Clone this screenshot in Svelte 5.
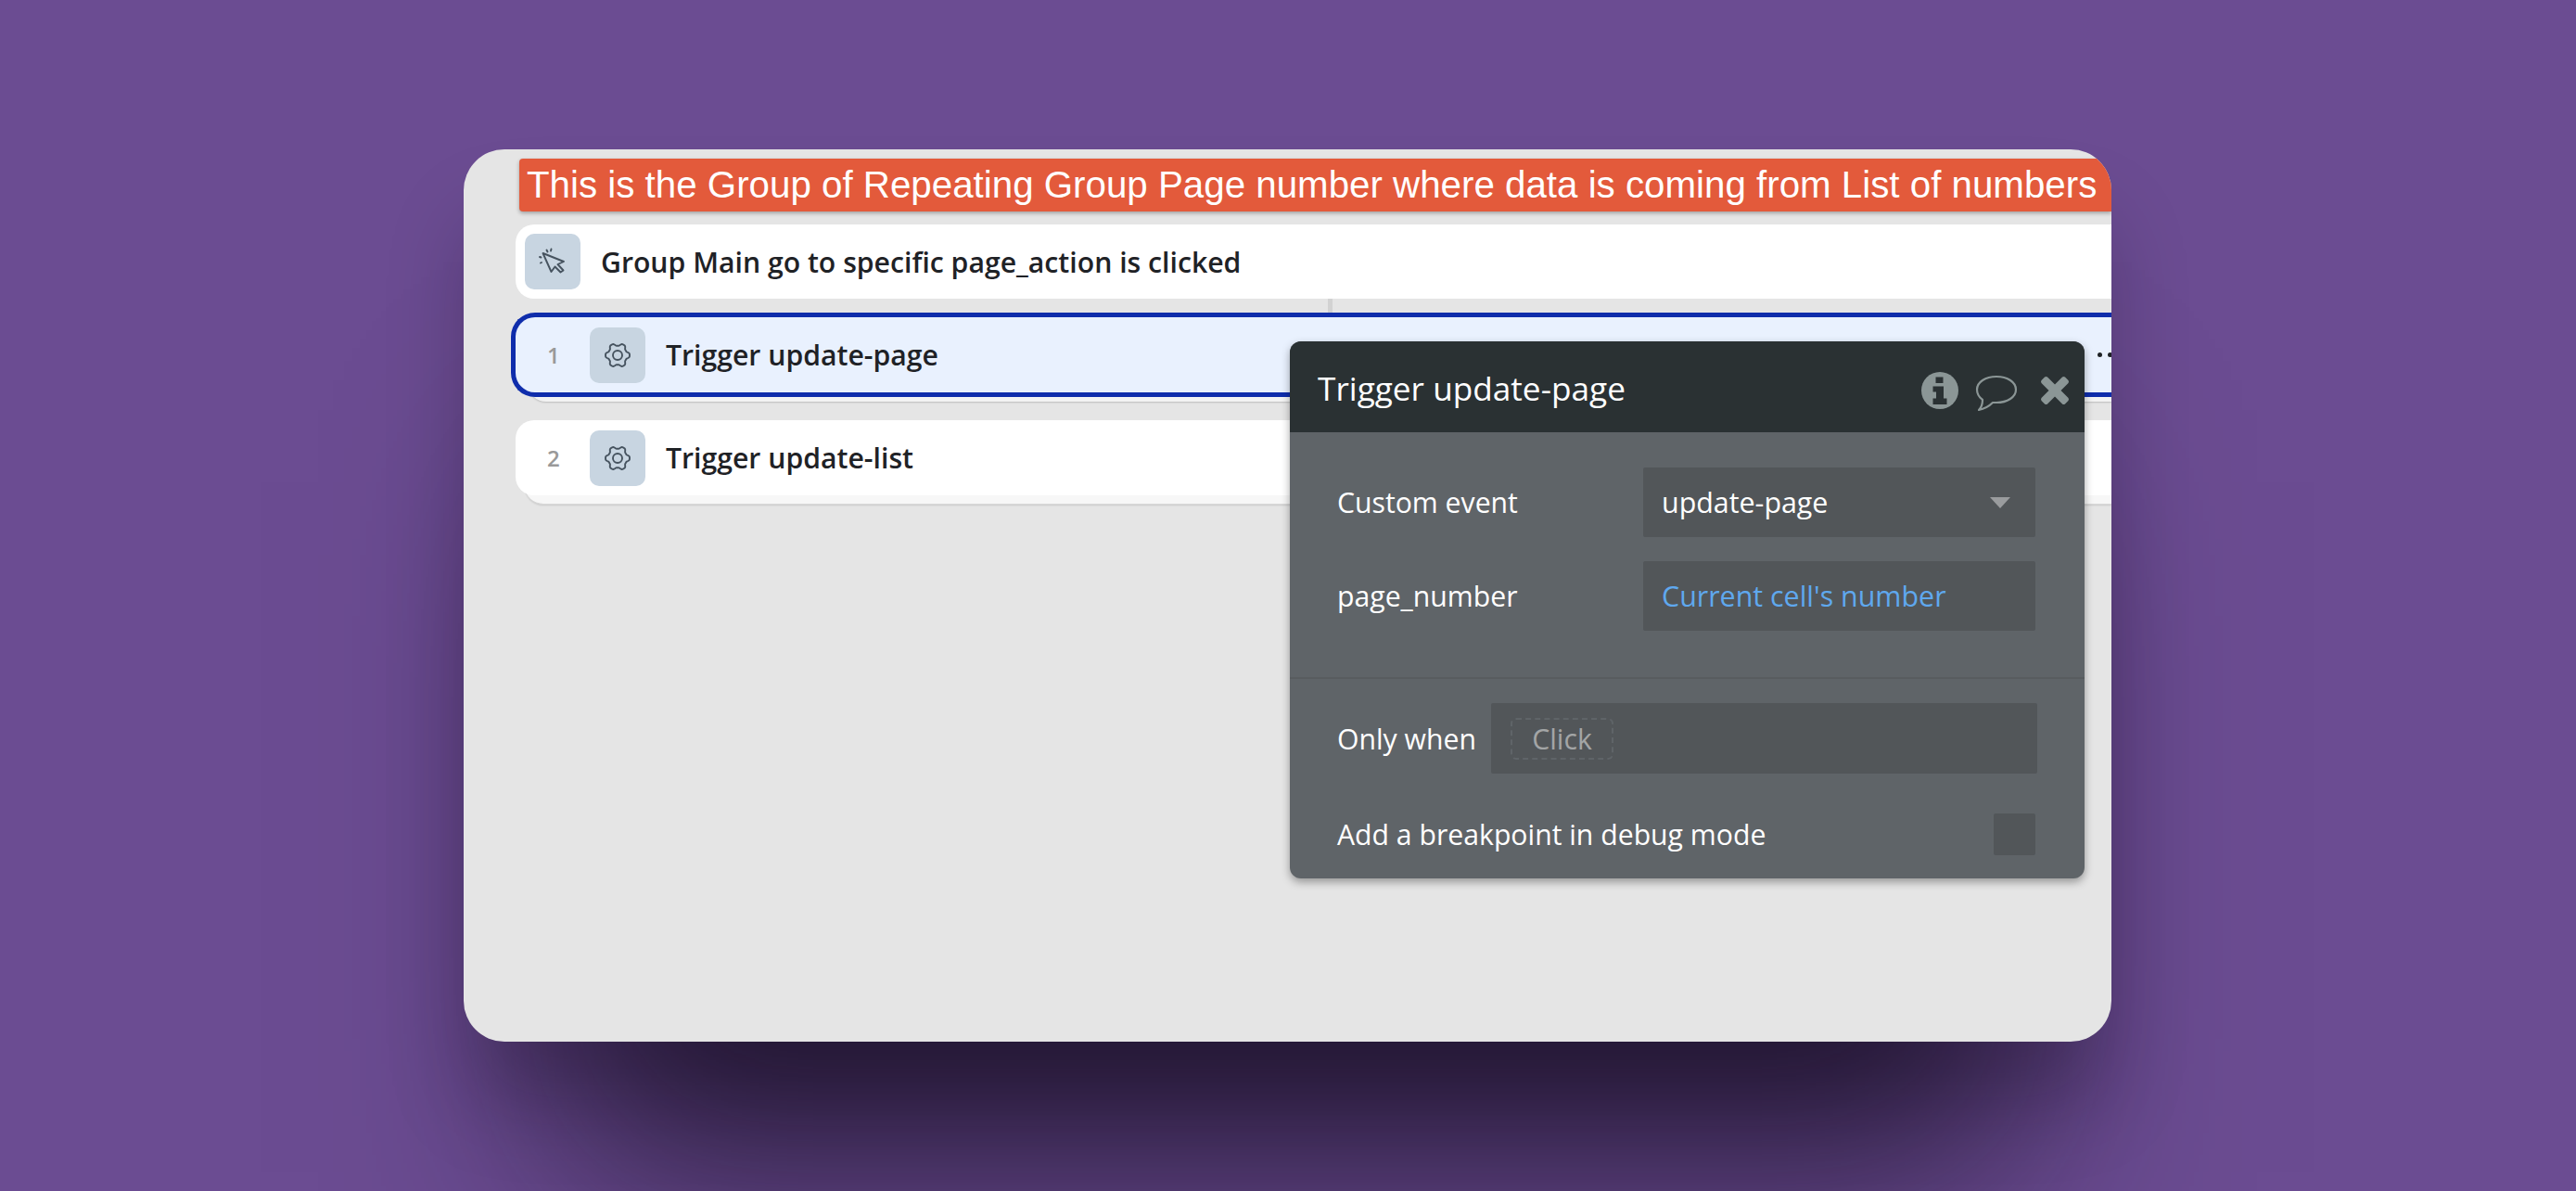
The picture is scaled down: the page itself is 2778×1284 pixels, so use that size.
<script>
  const rows = [
    { num: '1', label: 'Trigger update-page', selected: true },
    { num: '2', label: 'Trigger update-list', selected: false }
  ];

  // six lobed gear outline, same shape for every action row
  function gearPath() {
    let d = '';
    for (let i = 0; i < 120; i++) {
      const a = (i / 120) * Math.PI * 2;
      const r = 11.6 + 1.6 * Math.cos(6 * a) - 0.25 * Math.cos(18 * a);
      const x = 15 + r * Math.cos(a);
      const y = 15 + r * Math.sin(a);
      d += (i === 0 ? 'M' : 'L') + x.toFixed(2) + ' ' + y.toFixed(2) + ' ';
    }
    return d + 'Z';
  }
  const gear = gearPath();
</script>

<div class="page">
  <div class="window">
    <div class="banner">This is the Group of Repeating Group Page number where data is coming from List of numbers</div>

    <div class="event-row">
      <div class="icon-box">
        <svg width="32" height="32" viewBox="0 0 32 32" fill="none" stroke="#46535f" stroke-width="1.9" stroke-linejoin="round" stroke-linecap="round">
          <path d="M5.5 7 L28 16 L21.5 19 L27.5 25.5 L24.5 27.5 L18.5 21.5 L14.5 27 Z" />
          <path d="M14.5 2.5 L14 4.5 M9.5 3.5 L10.5 5.5 M2 11 L3.5 11.5 M3 17.5 L4 17" />
        </svg>
      </div>
      <span class="row-label">Group Main go to specific page_action is clicked</span>
    </div>

    <div class="connector"></div>

    {#each rows as row}
      <div class="action-wrap" class:last={!row.selected}>
        <div class="action-row" class:selected={row.selected}>
          <span class="num">{row.num}</span>
          <div class="icon-box">
            <svg width="30" height="30" viewBox="0 0 30 30" fill="none" stroke="#46535f" stroke-width="1.9">
              <path d={gear} />
              <circle cx="15" cy="15" r="5" />
            </svg>
          </div>
          <span class="row-label">{row.label}</span>
          {#if row.selected}
            <span class="dots"><i></i><i></i></span>
          {/if}
        </div>
      </div>
    {/each}

    <div class="panel">
      <div class="panel-head">
        <span class="panel-title">Trigger update-page</span>
        <div class="panel-icons">
          <svg width="40" height="40" viewBox="0 0 40 40">
            <circle cx="20" cy="20" r="20" fill="#8b9696" />
            <path d="M15.5 5.5h8v6.5h-8z M12.5 15.5h11.5v13h3.5v6.5H12.5v-6.5h3.5v-7h-3.5z" fill="#2a3133" />
          </svg>
          <svg class="bubble" width="46" height="40" viewBox="0 0 46 40" fill="none" stroke="#8b9696" stroke-width="2.2" stroke-linejoin="round">
            <path d="M23 2 C35 2 44 8 44 16 C44 24 35 30 23 30 C21 30 20 30 19 30 C15 34 9 37 4 38 C7 35 8 31 8 27 C4 24 2 20 2 16 C2 8 11 2 23 2 Z" />
          </svg>
          <svg class="close" width="32" height="32" viewBox="0 0 32 32" fill="#8b9696">
            <path d="M8 1.5 L16 9.5 L24 1.5 Q25.5 0.5 27 1.5 L30.5 5 Q31.5 6.5 30.5 8 L22.5 16 L30.5 24 Q31.5 25.5 30.5 27 L27 30.5 Q25.5 31.5 24 30.5 L16 22.5 L8 30.5 Q6.5 31.5 5 30.5 L1.5 27 Q0.5 25.5 1.5 24 L9.5 16 L1.5 8 Q0.5 6.5 1.5 5 L5 1.5 Q6.5 0.5 8 1.5 Z" />
          </svg>
        </div>
      </div>

      <div class="panel-section">
        <div class="field">
          <span class="field-label">Custom event</span>
          <div class="input select">
            <span>update-page</span>
            <span class="caret"></span>
          </div>
        </div>
        <div class="field">
          <span class="field-label">page_number</span>
          <div class="input dynamic">Current cell's number</div>
        </div>
      </div>

      <div class="panel-section lower">
        <div class="when">
          <span class="field-label">Only when</span>
          <div class="when-input">
            <span class="click-chip">Click</span>
          </div>
        </div>
        <div class="breakpoint">
          <span class="field-label">Add a breakpoint in debug mode</span>
          <div class="checkbox"></div>
        </div>
      </div>
    </div>
  </div>
</div>

<style>
  :global(body) {
    margin: 0;
    background: #6b4c92;
  }

  .page {
    width: 2778px;
    height: 1284px;
    display: flex;
    align-items: center;
    justify-content: center;
    overflow: hidden;
    background: #6b4c92;
  }

  .window {
    position: relative;
    width: 1777px;
    height: 962px;
    margin-right: 1px;
    background: #e5e5e5;
    border-radius: 44px;
    box-shadow:
      0 250px 220px -110px rgba(15, 8, 25, 0.72),
      0 70px 90px -10px rgba(15, 8, 25, 0.28);
    font-family: "Open Sans", sans-serif;
    display: flex;
    flex-direction: column;
    align-items: flex-start;
    overflow: hidden;
  }

  .banner {
    margin: 10px 0 0 60px;
    width: 1717px;
    height: 57px;
    flex: none;
    box-sizing: border-box;
    padding-left: 8px;
    background: #e35a3b;
    border-radius: 4px 0 0 4px;
    box-shadow: 0 2px 4px rgba(0, 0, 0, 0.3);
    color: #fff;
    font-family: "Liberation Sans", Arial, sans-serif;
    font-size: 40.3px;
    line-height: 57px;
    white-space: nowrap;
  }

  .event-row {
    margin: 14px 0 0 56px;
    width: 1721px;
    height: 80px;
    flex: none;
    box-sizing: border-box;
    padding-left: 10px;
    display: flex;
    align-items: center;
    background: #fff;
    border-radius: 20px 0 0 20px;
  }

  .event-row .row-label {
    margin-left: 22px;
  }

  .connector {
    margin-left: 932px;
    width: 5px;
    height: 15px;
    flex: none;
    background: #d2d2d2;
  }

  .icon-box {
    width: 60px;
    height: 60px;
    flex: none;
    display: flex;
    align-items: center;
    justify-content: center;
    background: #c8d5e1;
    border-radius: 10px;
  }

  .row-label {
    color: #1f2226;
    font-size: 30.2px;
    font-weight: 600;
    white-space: nowrap;
  }

  .action-wrap {
    margin-left: 51px;
    width: 1726px;
    flex: none;
    position: relative;
    margin-bottom: 25px;
  }

  .action-wrap.last {
    margin-left: 56px;
    width: 1721px;
  }

  .action-wrap::after {
    content: "";
    position: absolute;
    left: 18px;
    right: 0;
    bottom: -5px;
    height: 40px;
    background: #f3f3f3;
    border-radius: 0 0 0 20px;
    box-shadow: 0 1px 2px rgba(0, 0, 0, 0.18);
  }

  .action-wrap.last::after {
    left: 10px;
    bottom: -10px;
    border-bottom: 1px solid #d8d8d8;
    box-shadow: 0 1px 2px rgba(0, 0, 0, 0.12), inset 0 -9px 0 #f7f7f7;
  }

  .action-row {
    position: relative;
    z-index: 1;
    height: 81px;
    box-sizing: border-box;
    padding-left: 34px;
    display: flex;
    align-items: center;
    background: #fff;
    border-radius: 20px 0 0 20px;
  }

  .action-row.selected {
    height: 91px;
    background: #e9f1fe;
    border: solid #0f2dab;
    border-width: 5px 0 5px 5px;
    border-radius: 26px 0 0 26px;
  }

  .num {
    width: 46px;
    flex: none;
    color: #999;
    font-size: 24px;
    font-weight: 600;
  }

  .action-row .row-label {
    margin-left: 22px;
  }

  .dots {
    position: absolute;
    right: -1px;
    display: flex;
    gap: 6px;
  }

  .dots i {
    display: block;
    width: 5px;
    height: 5px;
    border-radius: 50%;
    background: #1f2226;
  }

  .panel {
    position: absolute;
    left: 891px;
    top: 207px;
    width: 857px;
    height: 579px;
    z-index: 2;
    display: flex;
    flex-direction: column;
    background: #5f6468;
    border-radius: 12px;
    box-shadow: 0 4px 10px rgba(0, 0, 0, 0.35);
    color: #fff;
    overflow: hidden;
  }

  .panel-head {
    height: 98px;
    flex: none;
    box-sizing: border-box;
    padding: 2px 16px 0 30px;
    display: flex;
    align-items: center;
    justify-content: space-between;
    background: #2a3133;
  }

  .panel-title {
    font-size: 35.2px;
    white-space: nowrap;
  }

  .panel-icons {
    display: flex;
    align-items: center;
    gap: 18px;
    margin-top: 6px;
  }

  .bubble {
    margin-top: 6px;
  }

  .close {
    margin-left: 6px;
  }

  .panel-section {
    flex: none;
    height: 266px;
    box-sizing: border-box;
    padding: 38px 53px 0 51px;
    display: flex;
    flex-direction: column;
    gap: 26px;
    border-bottom: 2px solid #585c5f;
  }

  .panel-section.lower {
    flex: 1;
    padding: 26px 51px 0 51px;
    gap: 43px;
    border-bottom: 0;
  }

  .field {
    display: flex;
    align-items: center;
    justify-content: space-between;
  }

  .field-label {
    font-size: 30.2px;
    font-weight: 400;
    white-space: nowrap;
  }

  .input {
    width: 423px;
    height: 75px;
    box-sizing: border-box;
    padding: 0 20px;
    display: flex;
    align-items: center;
    justify-content: space-between;
    background: #525659;
    border-radius: 2px;
    font-size: 30.4px;
  }

  .dynamic {
    color: #5fa8ee;
  }

  .caret {
    width: 0;
    height: 0;
    margin-right: 7px;
    border-left: 11px solid transparent;
    border-right: 11px solid transparent;
    border-top: 12px solid #9a9c9e;
  }

  .when {
    display: flex;
    align-items: center;
    justify-content: space-between;
  }

  .when-input {
    width: 589px;
    height: 76px;
    box-sizing: border-box;
    padding-left: 21px;
    display: flex;
    align-items: center;
    background: #525659;
    border-radius: 2px;
  }

  .click-chip {
    width: 111px;
    height: 45px;
    box-sizing: border-box;
    display: flex;
    align-items: center;
    justify-content: center;
    border: 2px dashed #5f6468;
    border-radius: 6px;
    color: #a3a5a6;
    font-size: 30.2px;
  }

  .breakpoint {
    display: flex;
    align-items: center;
    justify-content: space-between;
    margin-right: 2px;
  }

  .checkbox {
    width: 45px;
    height: 45px;
    background: #525659;
    border-radius: 2px;
  }
</style>
